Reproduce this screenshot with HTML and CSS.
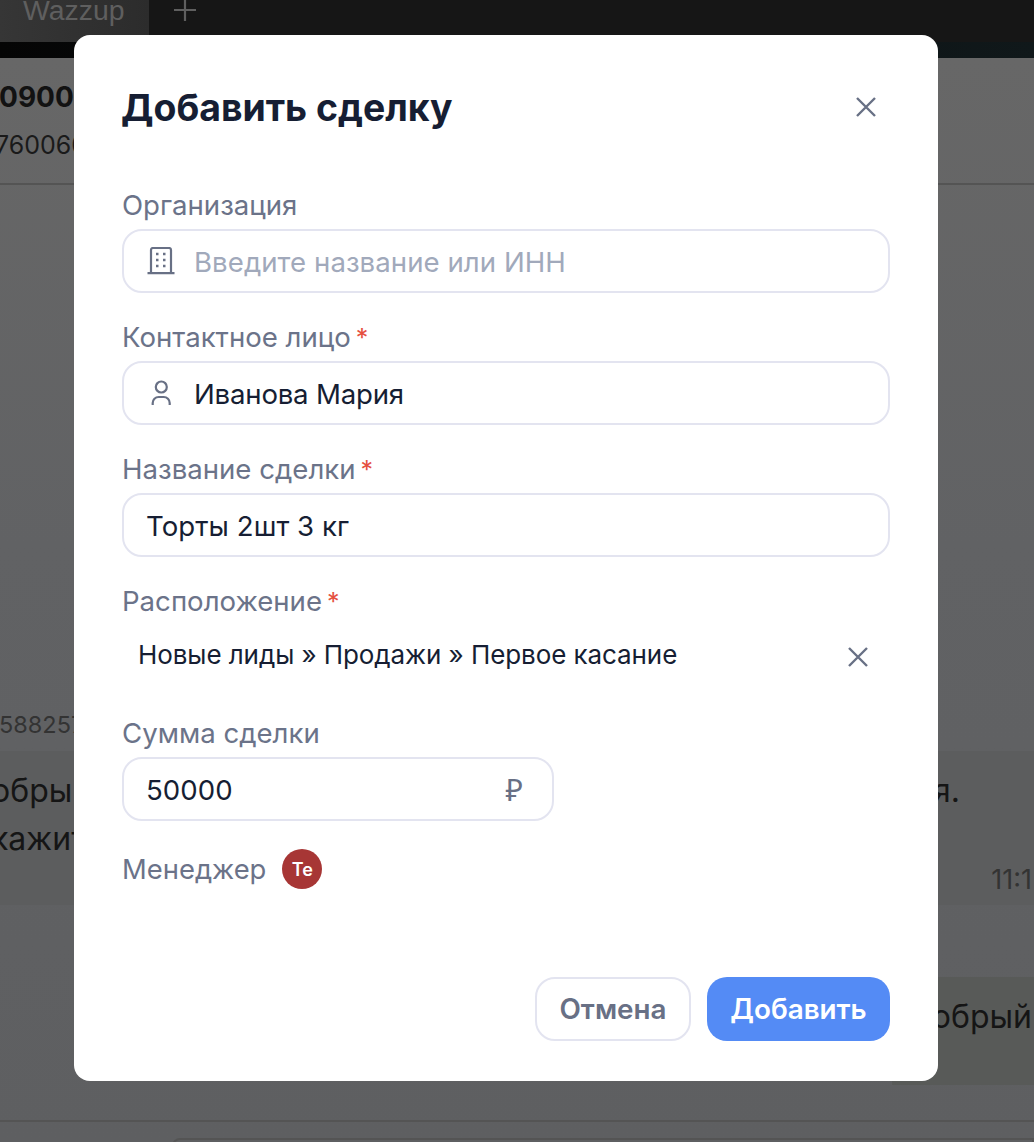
FILE: index.html
```html
<!DOCTYPE html>
<html lang="ru">
<head>
<meta charset="utf-8">
<title>Добавить сделку</title>
<link rel="stylesheet" href="styles.css">
</head>
<body>
<div class="app">
  <div class="tabs">
    <div class="tab">Wazzup</div>
    <svg class="tab-add" viewBox="0 0 22 22"><path d="M11 0V21M0 10H22"/></svg>
  </div>
  <div class="strip"></div>
  <main class="chat">
    <header class="chat-head">
      <div class="chat-title">09001</div>
      <div class="chat-phone">7600600</div>
    </header>
    <div class="chat-body">
      <div class="msg-id">588257</div>
      <div class="bubble bubble-first">
        <div class="bubble-line"><span>обрый</span><span class="tail">я.</span></div>
        <div class="bubble-line">кажите</div>
        <div class="bubble-time">11:1</div>
      </div>
      <div class="bubble bubble-second">
        <div class="bubble-line bubble-end">обрый</div>
      </div>
    </div>
    <footer class="chat-foot"><div class="chat-input"></div></footer>
  </main>
</div>

<div class="overlay">
  <section class="dialog">
    <div class="dialog-head">
      <h1 class="dialog-title">Добавить сделку</h1>
      <button class="close" aria-label="Закрыть">
        <svg class="close-icon" viewBox="0 0 20 20"><path d="M1 1 19 19M19 1 1 19"/></svg>
      </button>
    </div>

    <div class="field">
      <label class="label">Организация</label>
      <div class="input">
        <svg class="input-icon" viewBox="0 0 28 28"><path class="ln" d="M4 26V3a2 2 0 0 1 2-2h16a2 2 0 0 1 2 2v23M.5 26.200h27"/><path class="dots" d="M9 7h2.500M16 7h2.500M9 13h2.500M16 13h2.500M9 19h2.500M16 19h2.500"/></svg>
        <span class="placeholder">Введите название или ИНН</span>
      </div>
    </div>

    <div class="field">
      <label class="label">Контактное лицо<span class="req">*</span></label>
      <div class="input">
        <svg class="input-icon" viewBox="0 0 28 28"><circle class="ln" cx="14.300" cy="8" r="5.500"/><path class="ln" d="M5.700 26v-2a6 6 0 0 1 6-6h5a6 6 0 0 1 6 6v2"/></svg>
        <span class="value value-name">Иванова Мария</span>
      </div>
    </div>

    <div class="field">
      <label class="label">Название сделки<span class="req">*</span></label>
      <div class="input"><span class="value">Торты 2шт 3 кг</span></div>
    </div>

    <div class="field">
      <label class="label">Расположение<span class="req">*</span></label>
      <div class="location">
        <span class="location-text">Новые лиды » Продажи » Первое касание</span>
        <svg class="location-clear" viewBox="0 0 20 20"><path d="M1 1 19 19M19 1 1 19"/></svg>
      </div>
    </div>

    <div class="field">
      <label class="label">Сумма сделки</label>
      <div class="input input-sum">
        <span class="value">50000</span>
        <span class="currency">₽</span>
      </div>
    </div>

    <div class="manager">
      <span class="manager-label">Менеджер</span>
      <span class="avatar">Те</span>
    </div>

    <div class="actions">
      <button class="btn btn-cancel">Отмена</button>
      <button class="btn btn-primary">Добавить</button>
    </div>
  </section>
</div>
</body>
</html>
```
FILE: styles.css
```css
* { box-sizing: border-box; }
html, body { margin: 0; height: 100%; overflow: hidden; }
body { font-family: Inter, "Noto Sans", sans-serif; background: #5f6062; }

.app { height: 1142px; display: flex; flex-direction: column; overflow: hidden; }

.tabs { height: 42px; flex: none; display: flex; background: #161616; }
.tab { width: 149px; padding-left: 23px; background: linear-gradient(90deg, #363636, #2c2c2c); color: #5f5f5f; font-size: 28.400px; line-height: 20px; font-family: "Liberation Sans", sans-serif; overflow: hidden; }
.tab-add { margin-left: 25px; width: 22px; height: 22px; }
.tab-add path { stroke: #5f5f5f; stroke-width: 2.200; fill: none; }
.strip { height: 16px; flex: none; background: linear-gradient(90deg, #050505, #0c1113 60%, #10181a); }

.chat { flex: 1; display: flex; flex-direction: column; background: linear-gradient(180deg, #676767 0, #616264 45%, #5e5f61 100%); overflow: hidden; }
.chat-head { height: 127px; flex: none; border-bottom: 2px solid #545454; padding-top: 21px; }
.chat-title { font-size: 28px; line-height: 36px; font-weight: 700; color: #121212; white-space: nowrap; margin-left: -1px; }
.chat-phone { font-size: 25px; line-height: 36px; margin-top: 12px; margin-left: -5px; color: #1a1a1a; white-space: nowrap; }

.chat-body { flex: 1; display: flex; flex-direction: column; padding-top: 526px; }
.msg-id { font-size: 23.500px; line-height: 26px; color: #333; margin-top: 1px; height: 27px; white-space: nowrap; margin-left: -1px; }
.bubble { color: #151515; font-size: 32px; line-height: 48px; }
.bubble-first { height: 154px; margin-top: 12px; padding-top: 16px; position: relative; background: #5c5d5e; }
.bubble-line { display: flex; justify-content: space-between; padding-right: 74px; margin-left: -9px; white-space: nowrap; }
.bubble-time { position: absolute; right: 2px; bottom: 10px; font-size: 27px; line-height: 30px; color: #333; white-space: nowrap; }
.bubble-second { height: 108px; margin-top: 72px; margin-left: 892px; padding-top: 16px; background: #585a58; }
.bubble-end { justify-content: flex-end; padding-right: 0; margin-left: 0; margin-right: 2px; }

.chat-foot { height: 22px; flex: none; border-top: 2px solid #545454; margin-top: 34px; padding: 16px 0 0 172px; }
.chat-input { height: 10px; border: 2px solid #545454; border-bottom: 0; border-radius: 8px 0 0 0; }

.overlay { position: absolute; inset: 0; }
.dialog { position: absolute; left: 74px; top: 35px; width: 864px; height: 1046px; background: #fff; border-radius: 16px; padding: 47px 48px 40px 48px; display: flex; flex-direction: column; }

.dialog-head { display: flex; justify-content: space-between; align-items: center; height: 52px; margin-bottom: 51px; }
.dialog-title { margin: 0; margin-left: -1px; font-size: 37.400px; line-height: 52px; font-weight: 700; color: #161e33; }
.close { border: 0; background: none; padding: 0; width: 20px; height: 20px; margin-right: 14px; margin-top: -2px; display: flex; }
.close-icon { width: 20px; height: 20px; }
.close-icon path, .location-clear path { stroke: #687085; stroke-width: 2.400; fill: none; }

.field { margin-bottom: 24px; display: flex; flex-direction: column; }
.label { font-size: 27.600px; line-height: 40px; height: 44px; color: #6b7389; white-space: nowrap; }
.req { color: #e5503f; margin-left: 5px; font-size: 25px; }

.input { height: 64px; border: 2px solid #e3e4f0; border-radius: 20px; display: flex; align-items: center; padding: 2px 22px 0; font-size: 27.600px; }
.input-icon { width: 28px; height: 28px; margin-left: 1px; margin-right: 19px; margin-top: -2px; flex: none; }
.ln { stroke: #687085; stroke-width: 2.200; fill: none; }
.dots { stroke: #687085; stroke-width: 2.500; fill: none; }
.placeholder { color: #a1a9bb; letter-spacing: .05px; }
.value { color: #161e33; letter-spacing: .05px; }
.value-name { letter-spacing: -.2px; }

.input-sum { width: 432px; justify-content: space-between; padding-right: 29px; }
.currency { color: #687085; font: 400 30px "Noto Sans", sans-serif; margin-top: -2px; }

.location { height: 64px; display: flex; align-items: center; justify-content: space-between; padding: 0 22px 0 16px; }
.location-text { font-size: 26px; color: #161e33; margin-top: -6px; letter-spacing: -.08px; }
.location-clear { width: 20px; height: 20px; }

.manager { display: flex; align-items: center; gap: 16px; height: 40px; margin-top: 4px; }
.manager-label { font-size: 27.400px; color: #6b7389; }
.avatar { width: 40px; height: 40px; border-radius: 50%; background: #a73635; color: #fff; font-size: 18px; font-weight: 600; display: flex; align-items: center; justify-content: center; }

.actions { margin-top: auto; display: flex; justify-content: flex-end; gap: 16px; }
.btn { height: 64px; border-radius: 20px; font: 600 27.800px Inter, sans-serif; padding: 0; }
.btn-cancel { width: 156px; background: #fff; border: 2px solid #e3e4f0; color: #687085; }
.btn-primary { width: 183px; background: #548bf5; border: 0; color: #fff; }
```
